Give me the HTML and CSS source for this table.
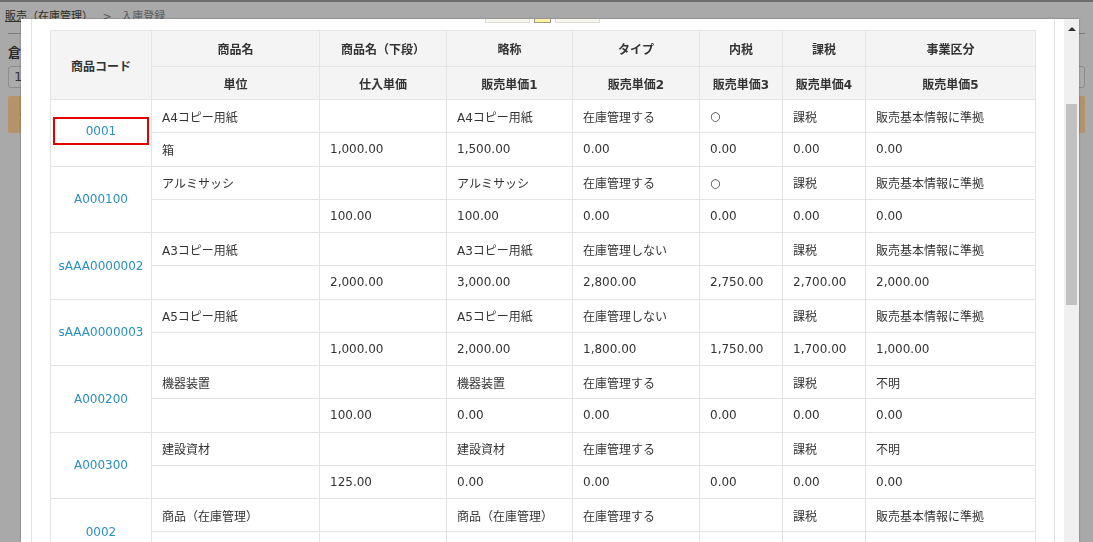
FILE: index.html
```html
<!DOCTYPE html>
<html lang="ja">
<head>
  <meta charset="UTF-8" />
  <title>商品選択</title>
  <link rel="stylesheet" href="styles.css">
</head>
<body>

  <div class="page">
    <div class="page-top"></div>
    <div class="page-inner">
      <div class="breadcrumb">
        <a class="crumb-link">販売（在庫管理）</a>
        <span class="crumb-sep">&gt;</span>
        <span class="crumb-current">入庫登録</span>
      </div>
      <div class="page-rule"></div>
      <div class="page-label">倉庫</div>
      <div class="page-input">1</div>
      <div class="page-button">- 明細追加</div>
    </div>
  </div>

  <div class="modal">
    <div class="modal-body">
      <div class="modal-frame">
        <div class="modal-tabs">
          <span class="tab"></span>
          <span class="tab tab-current"></span>
          <span class="tab"></span>
        </div>

        <table class="item-table">
          <colgroup>
            <col style="width: 101px">
            <col style="width: 168px">
            <col style="width: 127px">
            <col style="width: 126px">
            <col style="width: 127px">
            <col style="width: 83px">
            <col style="width: 83px">
            <col style="width: 170px">
          </colgroup>
          <thead>
            <tr class="head-top">
              <th rowspan="2">商品コード</th>
              <th>商品名</th>
              <th>商品名（下段）</th>
              <th>略称</th>
              <th>タイプ</th>
              <th>内税</th>
              <th>課税</th>
              <th>事業区分</th>
            </tr>
            <tr class="head-sub">
              <th>単位</th>
              <th>仕入単価</th>
              <th>販売単価1</th>
              <th>販売単価2</th>
              <th>販売単価3</th>
              <th>販売単価4</th>
              <th>販売単価5</th>
            </tr>
          </thead>
          <tbody>
            <tr>
              <td class="code" rowspan="2"><a class="code-link selected">0001</a></td>
              <td>A4コピー用紙</td>
              <td></td>
              <td>A4コピー用紙</td>
              <td>在庫管理する</td>
              <td>○</td>
              <td>課税</td>
              <td>販売基本情報に準拠</td>
            </tr>
            <tr>
              <td>箱</td>
              <td>1,000.00</td>
              <td>1,500.00</td>
              <td>0.00</td>
              <td>0.00</td>
              <td>0.00</td>
              <td>0.00</td>
            </tr>
            <tr>
              <td class="code" rowspan="2"><a class="code-link">A000100</a></td>
              <td>アルミサッシ</td>
              <td></td>
              <td>アルミサッシ</td>
              <td>在庫管理する</td>
              <td>○</td>
              <td>課税</td>
              <td>販売基本情報に準拠</td>
            </tr>
            <tr>
              <td></td>
              <td>100.00</td>
              <td>100.00</td>
              <td>0.00</td>
              <td>0.00</td>
              <td>0.00</td>
              <td>0.00</td>
            </tr>
            <tr>
              <td class="code" rowspan="2"><a class="code-link">sAAA0000002</a></td>
              <td>A3コピー用紙</td>
              <td></td>
              <td>A3コピー用紙</td>
              <td>在庫管理しない</td>
              <td></td>
              <td>課税</td>
              <td>販売基本情報に準拠</td>
            </tr>
            <tr>
              <td></td>
              <td>2,000.00</td>
              <td>3,000.00</td>
              <td>2,800.00</td>
              <td>2,750.00</td>
              <td>2,700.00</td>
              <td>2,000.00</td>
            </tr>
            <tr>
              <td class="code" rowspan="2"><a class="code-link">sAAA0000003</a></td>
              <td>A5コピー用紙</td>
              <td></td>
              <td>A5コピー用紙</td>
              <td>在庫管理しない</td>
              <td></td>
              <td>課税</td>
              <td>販売基本情報に準拠</td>
            </tr>
            <tr>
              <td></td>
              <td>1,000.00</td>
              <td>2,000.00</td>
              <td>1,800.00</td>
              <td>1,750.00</td>
              <td>1,700.00</td>
              <td>1,000.00</td>
            </tr>
            <tr>
              <td class="code" rowspan="2"><a class="code-link">A000200</a></td>
              <td>機器装置</td>
              <td></td>
              <td>機器装置</td>
              <td>在庫管理する</td>
              <td></td>
              <td>課税</td>
              <td>不明</td>
            </tr>
            <tr>
              <td></td>
              <td>100.00</td>
              <td>0.00</td>
              <td>0.00</td>
              <td>0.00</td>
              <td>0.00</td>
              <td>0.00</td>
            </tr>
            <tr>
              <td class="code" rowspan="2"><a class="code-link">A000300</a></td>
              <td>建設資材</td>
              <td></td>
              <td>建設資材</td>
              <td>在庫管理する</td>
              <td></td>
              <td>課税</td>
              <td>不明</td>
            </tr>
            <tr>
              <td></td>
              <td>125.00</td>
              <td>0.00</td>
              <td>0.00</td>
              <td>0.00</td>
              <td>0.00</td>
              <td>0.00</td>
            </tr>
            <tr>
              <td class="code" rowspan="2"><a class="code-link">0002</a></td>
              <td>商品（在庫管理）</td>
              <td></td>
              <td>商品（在庫管理）</td>
              <td>在庫管理する</td>
              <td></td>
              <td>課税</td>
              <td>販売基本情報に準拠</td>
            </tr>
            <tr>
              <td>個</td>
              <td></td>
              <td></td>
              <td></td>
              <td></td>
              <td></td>
              <td></td>
            </tr>
          </tbody>
        </table>
      </div>
    </div>
    <div class="scrollbar">
      <span class="scroll-up"></span>
      <span class="scroll-thumb"></span>
    </div>
  </div>

</body>
</html>
```

FILE: styles.css
```css
html, body {
  margin: 0;
  height: 100%;
  overflow: hidden;
}

body {
  font-family: "DejaVu Sans", "Noto Sans CJK JP", sans-serif;
  font-size: 12px;
  color: #333;
  background-color: #a9a9a9;
}

/* page behind the dialog (already dimmed) */
.page-top {
  height: 2px;
  background-color: #6c6c6c;
}

.page-inner {
  padding: 0 8px;
}

.breadcrumb {
  margin: 7px 0 0 -3px;
  font-size: 11px;
  line-height: 16px;
  white-space: nowrap;
}

.crumb-link {
  color: #2e2e22;
  text-decoration: underline;
}

.crumb-sep {
  margin: 0 6px;
  color: #5a5a5a;
}

.crumb-current {
  color: #5a5a5a;
}

.page-rule {
  height: 1px;
  margin-top: 8px;
  background-color: #7c7c7c;
}

.page-label {
  margin-top: 10px;
  font-size: 13px;
  font-weight: bold;
  line-height: 18px;
  color: #2a2a2a;
}

.page-input {
  margin-top: 4px;
  height: 20px;
  padding-left: 5px;
  line-height: 20px;
  font-size: 13px;
  color: #333;
  border: 1px solid #8c8c8c;
  border-radius: 3px;
  background-color: #ababab;
}

.page-button {
  margin-top: 8px;
  height: 37px;
  padding-left: 12px;
  line-height: 37px;
  color: #3a3a3a;
  border-radius: 2px;
  background-color: #b4936a;
}

/* dialog */
.modal {
  position: fixed;
  left: 21px;
  top: 19px;
  width: 1058px;
  bottom: 0;
  display: flex;
  background-color: white;
  box-shadow: 0 0 2px rgba(0, 0, 0, 0.35);
}

.modal-body {
  flex: 1;
  overflow: hidden;
  padding: 0 9px 0 10px;
}

.modal-frame {
  min-height: 100%;
  padding: 0 19px 40px 18px;
  border-left: 1px solid #e2e2e2;
  border-right: 1px solid #e2e2e2;
}

.modal-tabs {
  display: flex;
  justify-content: center;
  align-items: flex-end;
  gap: 4px;
  height: 24px;
  margin-top: -20px;
  margin-bottom: 7px;
}

.tab {
  width: 43px;
  height: 22px;
  border: 1px solid #dcdcd2;
  background-color: #f6f6ee;
}

.tab-current {
  width: 15px;
  border-color: #9a9a8a;
  background-color: #fff4a6;
}

.item-table {
  width: 985px;
  table-layout: fixed;
  border-collapse: collapse;
}

.item-table th,
.item-table td {
  border: 1px solid #e4e4e4;
  padding: 0 10px;
  white-space: nowrap;
  overflow: hidden;
}

.item-table th {
  background-color: #f4f4f4;
  font-weight: bold;
  text-align: center;
  color: #333;
}

.head-top {
  height: 36px;
}

.head-sub {
  height: 33px;
}

.item-table tbody tr {
  height: 33.25px;
}

.item-table td {
  text-align: left;
}

.item-table td.code {
  padding: 0;
  text-align: center;
}

.code-link {
  color: #2a90c2;
  cursor: pointer;
}

.code-link.selected {
  display: inline-block;
  width: 92px;
  height: 24px;
  line-height: 24px;
  margin-bottom: 3px;
  border: 2px solid #e60000;
}

/* scrollbar drawn by hand */
.scrollbar {
  width: 15px;
  display: flex;
  flex-direction: column;
  align-items: center;
  background-color: #f0f0f0;
}

.scroll-up {
  margin-top: 8px;
  border-left: 4px solid transparent;
  border-right: 4px solid transparent;
  border-bottom: 4px solid #333;
}

.scroll-thumb {
  margin-top: 73px;
  width: 11px;
  height: 201px;
  background-color: #c1c1c1;
}
```
